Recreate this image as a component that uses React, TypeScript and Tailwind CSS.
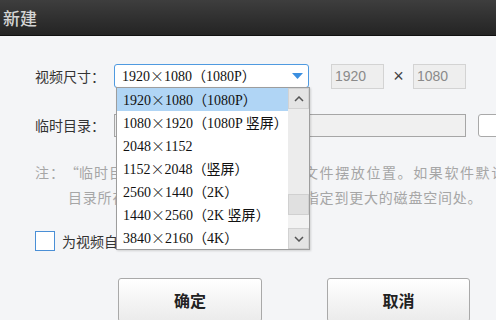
const sizes: [string, string, string][] = [
  ["1920", "1080", "1080P"],
  ["1080", "1920", "1080P 竖屏"],
  ["2048", "1152", ""],
  ["1152", "2048", "竖屏"],
  ["2560", "1440", "2K"],
  ["1440", "2560", "2K 竖屏"],
  ["3840", "2160", "4K"],
];

function SizeText({ w, h, tag }: { w: string; h: string; tag: string }) {
  return (
    <span className="whitespace-nowrap font-['Liberation_Serif','Noto_Sans_CJK_SC',serif] text-[14px] text-[#111]">
      {w}
      <span className="inline-block w-[14px] text-center font-['Noto_Sans_CJK_SC',sans-serif] font-light">×</span>
      {h}
      {tag && <span className="font-['Noto_Sans_CJK_SC',sans-serif]">（</span>}
      {tag}
      {tag && <span className="font-['Noto_Sans_CJK_SC',sans-serif]">）</span>}
    </span>
  );
}

function Chevron({ up }: { up?: boolean }) {
  return (
    <svg width="10" height="6" viewBox="0 0 10 6">
      <polyline
        points={up ? "1,5 5,1 9,5" : "1,1 5,5 9,1"}
        fill="none"
        stroke="#555"
        strokeWidth="1.5"
      />
    </svg>
  );
}

function SizeList() {
  return (
    <div className="absolute left-[1px] top-full z-10 flex h-[163px] w-[194px] border border-[#9d9d9d] bg-white shadow-[1px_1px_2px_rgba(0,0,0,0.15)]">
      <div className="flex-1 overflow-hidden">
        {sizes.map(([w, h, tag], i) => (
          <div
            key={i}
            className={
              "flex h-[23px] items-center pl-[6px] " +
              (i === 0 ? "bg-[#b0d5f5]" : "")
            }
          >
            <SizeText w={w} h={h} tag={tag} />
          </div>
        ))}
      </div>
      <div className="flex w-[21px] flex-col bg-[#ececec]">
        <div className="flex h-[21px] items-center justify-center border border-[#d2d2d2] bg-[#e4e4e4]">
          <Chevron up />
        </div>
        <div className="flex-1" />
        <div className="h-[21px] border border-[#d0d0d0] bg-[#e0e0e0]" />
        <div className="h-[13px] bg-[#f2f2f2]" />
        <div className="flex h-[21px] items-center justify-center border border-[#d2d2d2] bg-[#e4e4e4]">
          <Chevron />
        </div>
      </div>
    </div>
  );
}

function ValueBox({ value }: { value: string }) {
  return (
    <div className="flex h-[25px] w-[53px] shrink-0 items-center border border-[#d3d3d3] bg-[#eeeeee] pl-[3px] font-['Liberation_Sans',sans-serif] text-[14px] text-[#8a8a8a]">
      {value}
    </div>
  );
}

export default function App() {
  return (
    <div className="h-[320px] w-[496px] overflow-hidden bg-[#f4f5f7] font-['Noto_Sans_CJK_SC',sans-serif]">
      <div className="h-[36px] border-b border-[#111] bg-gradient-to-b from-[#3e3e3e] to-[#242424] pl-[3px] text-[17px] font-medium leading-[35px] text-[#d4d4d4]">
        新建
      </div>

      <div className="pl-[35px] pt-[28px]">
        <div className="flex h-[24px] items-center">
          <span className="w-[79px] shrink-0 text-[14px] text-[#333]">视频尺寸：</span>
          <div className="relative flex h-[24px] w-[195px] shrink-0 items-center justify-between rounded-[3px] border border-[#4f9ae0] bg-white pl-[7px] pr-[5px]">
            <SizeText w="1920" h="1080" tag="1080P" />
            <svg width="11" height="6" viewBox="0 0 11 6">
              <polygon points="0,0 11,0 5.5,6" fill="#3b8fe0" />
            </svg>
            <SizeList />
          </div>
          <div className="ml-[22px]">
            <ValueBox value="1920" />
          </div>
          <span className="w-[29px] shrink-0 text-center font-['Liberation_Sans',sans-serif] text-[18px] text-[#444]">×</span>
          <ValueBox value="1080" />
        </div>

        <div className="mt-[26px] flex h-[23px] items-center">
          <span className="w-[79px] shrink-0 text-[14px] text-[#333]">临时目录：</span>
          <div className="h-[23px] w-[352px] shrink-0 border border-[#a6a6a6] bg-[#f0f0f0]" />
          <div className="ml-[12px] h-[23px] w-[60px] shrink-0 rounded-[3px] border border-[#a9a9a9] bg-white" />
        </div>

        <div className="mt-[23px] whitespace-nowrap text-[14px] leading-[25px] text-[#a6a6a6]">
          <div className="tracking-[1px]">
            注：<span className="inline-block w-[14px] text-right">“</span>临时目录”是软件处理视频时临时
            <span className="tracking-[1.6px]">文件摆放位置。如果软件默认临时目录</span>
          </div>
          <div className="pl-[33px] tracking-[0.8px]">目录所在的磁盘空间不足，建议将其指定到更大的磁盘空间处。</div>
        </div>

        <div className="mt-[21px] flex h-[20px] items-center gap-[7px]">
          <div className="h-[20px] w-[20px] shrink-0 border border-[#4a8fd6] bg-white" />
          <span className="text-[14px] leading-[16px] text-[#333]">为视频自动添加片头</span>
        </div>

        <div className="ml-[83px] mt-[27px] flex gap-[65px]">
          <button className="h-[44px] w-[144px] shrink-0 rounded-[3px] border border-[#a9a9a9] bg-gradient-to-b from-white to-[#ebebeb] text-[16px] font-bold text-[#222]">
            确定
          </button>
          <button className="h-[44px] w-[143px] shrink-0 rounded-[3px] border border-[#a9a9a9] bg-gradient-to-b from-white to-[#ebebeb] text-[16px] font-bold text-[#222]">
            取消
          </button>
        </div>
      </div>
    </div>
  );
}
